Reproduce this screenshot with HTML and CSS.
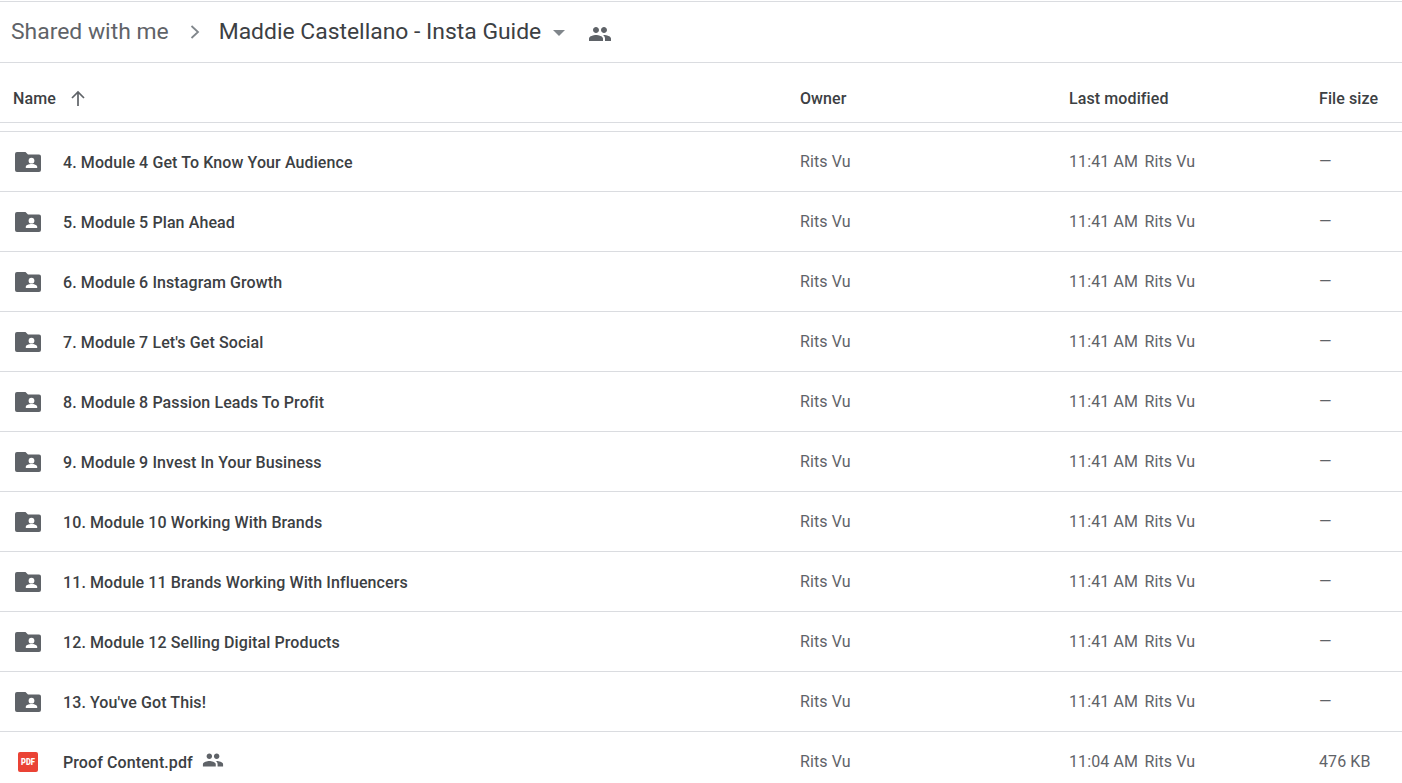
FILE: index.html
```html
<!DOCTYPE html>
<html lang="en">
<head>
<meta charset="utf-8">
<title>Maddie Castellano - Insta Guide</title>
<link rel="stylesheet" href="styles.css">
</head>
<body>
<svg class="defs" width="0" height="0" aria-hidden="true">
  <symbol id="folder" viewBox="0 0 26 20"><path fill-rule="evenodd" d="M2 0h8.500l2.500 2.500h11a2 2 0 0 1 2 2V18a2 2 0 0 1-2 2H2a2 2 0 0 1-2-2V2a2 2 0 0 1 2-2zM16.500 5.800a2.900 2.900 0 1 0 0 5.800 2.900 2.900 0 0 0 0-5.800zM10.800 16h11.400v-1.200c0-1.900-3.800-2.700-5.700-2.700s-5.700.8-5.700 2.700z"/></symbol>
  <symbol id="people" viewBox="0 0 24 24"><path d="M16 11c1.660 0 2.990-1.340 2.990-3S17.660 5 16 5s-3 1.340-3 3 1.340 3 3 3zm-8 0c1.660 0 2.990-1.340 2.990-3S9.660 5 8 5 5 6.340 5 8s1.340 3 3 3zm0 2c-2.330 0-7 1.170-7 3.500V19h14v-2.500C15 14.170 10.330 13 8 13zm8 0c-.29 0-.62.02-.97.05 1.160.84 1.970 1.970 1.970 3.450V19h6v-2.500c0-2.330-4.670-3.500-7-3.500z"/></symbol>
</svg>
<header class="crumbs">
  <span class="crumb-parent">Shared with me</span>
  <svg class="chev" width="12" height="16" viewBox="0 0 12 16"><path d="M2.500 2 9 8l-6.500 6" fill="none" stroke="#80868b" stroke-width="1.800"/></svg>
  <span class="crumb-current">Maddie Castellano - Insta Guide</span>
  <span class="caret"></span>
  <svg class="crumb-people"><use href="#people"/></svg>
</header>
<div class="head row-grid">
  <div class="name-head"><span>Name</span>
    <svg width="16" height="16" viewBox="0 0 16 16"><path d="M8 16V2M2 8l6-6 6 6" fill="none" stroke="#5f6368" stroke-width="1.700"/></svg>
  </div>
  <div>Owner</div>
  <div>Last modified</div>
  <div>File size</div>
</div>
<main class="list">
  <div class="row row-grid"><div class="name"><svg class="folder"><use href="#folder"/></svg><span>4. Module 4 Get To Know Your Audience</span></div><div>Rits Vu</div><div class="mod"><span>11:41 AM</span><span>Rits Vu</span></div><div>—</div></div>
  <div class="row row-grid"><div class="name"><svg class="folder"><use href="#folder"/></svg><span>5. Module 5 Plan Ahead</span></div><div>Rits Vu</div><div class="mod"><span>11:41 AM</span><span>Rits Vu</span></div><div>—</div></div>
  <div class="row row-grid"><div class="name"><svg class="folder"><use href="#folder"/></svg><span>6. Module 6 Instagram Growth</span></div><div>Rits Vu</div><div class="mod"><span>11:41 AM</span><span>Rits Vu</span></div><div>—</div></div>
  <div class="row row-grid"><div class="name"><svg class="folder"><use href="#folder"/></svg><span>7. Module 7 Let's Get Social</span></div><div>Rits Vu</div><div class="mod"><span>11:41 AM</span><span>Rits Vu</span></div><div>—</div></div>
  <div class="row row-grid"><div class="name"><svg class="folder"><use href="#folder"/></svg><span>8. Module 8 Passion Leads To Profit</span></div><div>Rits Vu</div><div class="mod"><span>11:41 AM</span><span>Rits Vu</span></div><div>—</div></div>
  <div class="row row-grid"><div class="name"><svg class="folder"><use href="#folder"/></svg><span>9. Module 9 Invest In Your Business</span></div><div>Rits Vu</div><div class="mod"><span>11:41 AM</span><span>Rits Vu</span></div><div>—</div></div>
  <div class="row row-grid"><div class="name"><svg class="folder"><use href="#folder"/></svg><span>10. Module 10 Working With Brands</span></div><div>Rits Vu</div><div class="mod"><span>11:41 AM</span><span>Rits Vu</span></div><div>—</div></div>
  <div class="row row-grid"><div class="name"><svg class="folder"><use href="#folder"/></svg><span>11. Module 11 Brands Working With Influencers</span></div><div>Rits Vu</div><div class="mod"><span>11:41 AM</span><span>Rits Vu</span></div><div>—</div></div>
  <div class="row row-grid"><div class="name"><svg class="folder"><use href="#folder"/></svg><span>12. Module 12 Selling Digital Products</span></div><div>Rits Vu</div><div class="mod"><span>11:41 AM</span><span>Rits Vu</span></div><div>—</div></div>
  <div class="row row-grid"><div class="name"><svg class="folder"><use href="#folder"/></svg><span>13. You've Got This!</span></div><div>Rits Vu</div><div class="mod"><span>11:41 AM</span><span>Rits Vu</span></div><div>—</div></div>
  <div class="row row-grid"><div class="name"><svg class="pdf" viewBox="0 0 20 20"><rect width="20" height="20" rx="2" fill="#ea4335"/><text x="3" y="13" textLength="14" lengthAdjust="spacingAndGlyphs" class="pdf-text">PDF</text></svg><span>Proof Content.pdf</span><svg class="shared"><use href="#people"/></svg></div><div>Rits Vu</div><div class="mod"><span>11:04 AM</span><span>Rits Vu</span></div><div>476 KB</div></div>
</main>
</body>
</html>
```
FILE: styles.css
```css
html, body {
  margin: 0;
  height: 783px;
  overflow: hidden;
  background: #fff;
}
body {
  font-family: Roboto, "Liberation Sans", sans-serif;
  font-size: 16px;
  letter-spacing: 0.1px;
  color: #5f6368;
  padding-top: 1px;
  box-sizing: border-box;
}
.defs { position: absolute; }
.crumbs {
  height: 60px;
  border-top: 1px solid #dadce0;
  border-bottom: 1px solid #dadce0;
  display: flex;
  align-items: center;
  padding-left: 11px;
  letter-spacing: 0;
}
.crumb-parent { font-size: 22.900px; color: #5f6368; padding-bottom: 2px; }
.chev { margin-left: 20px; }
.crumb-current { font-size: 22.900px; color: #3c4043; margin-left: 18px; padding-bottom: 2px; }
.caret {
  width: 0;
  height: 0;
  margin-left: 12px;
  margin-top: 2px;
  border-left: 6.500px solid transparent;
  border-right: 6.500px solid transparent;
  border-top: 6.500px solid #80868b;
}
.crumb-people { width: 24px; height: 24px; margin-left: 23px; margin-top: 4px; fill: #5f6368; }
.row-grid {
  display: grid;
  grid-template-columns: 787px 269px 250px 83px;
  padding-left: 13px;
  align-items: center;
}
.head {
  box-sizing: border-box;
  height: 60px;
  padding-top: 11px;
  border-bottom: 1px solid #dadce0;
  font-weight: 500;
  color: #3c4043;
}
.name-head { display: flex; align-items: center; gap: 14px; }
.list { margin-top: 8px; border-top: 1px solid #dadce0; }
.row { height: 59px; border-bottom: 1px solid #dadce0; padding-left: 13px; }
.name {
  display: flex;
  align-items: center;
  font-weight: 500;
  color: #3c4043;
  padding-left: 2px;
}
.name span { padding-top: 2px; }
.folder { width: 26px; height: 20px; margin-right: 22px; fill: #5f6368; flex: none; }
.pdf { width: 20px; height: 20px; margin-left: 3px; margin-right: 25px; flex: none; }
.pdf-text { font-family: Roboto, sans-serif; font-size: 8.500px; font-weight: 900; fill: #fff; letter-spacing: 0; }
.shared { width: 22px; height: 22px; margin-left: 9px; margin-top: -4px; fill: #5f6368; }
.mod { display: flex; gap: 6.500px; }
```
